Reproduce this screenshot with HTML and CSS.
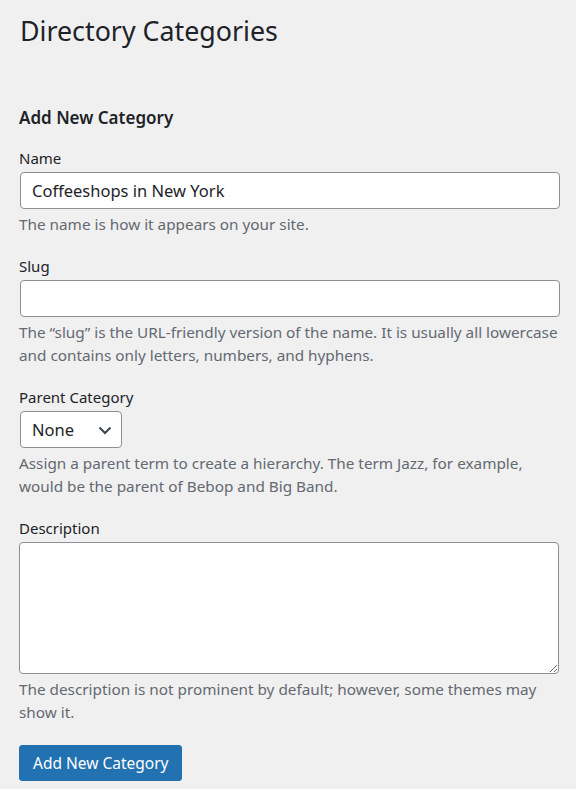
FILE: index.html
```html
<!DOCTYPE html>
<html lang="en">
<head>
<meta charset="utf-8">
<title>Directory Categories</title>
<link rel="stylesheet" href="styles.css">
</head>
<body>
<div class="wrap">
  <h1 class="page-title">Directory Categories</h1>
  <div class="form-wrap">
    <h2 class="form-title">Add New Category</h2>
    <form class="form">
      <div class="field">
        <label class="label" for="tag-name">Name</label>
        <input class="input" id="tag-name" type="text" value="Coffeeshops in New York">
        <p class="description">The name is how it appears on your site.</p>
      </div>
      <div class="field">
        <label class="label" for="tag-slug">Slug</label>
        <input class="input" id="tag-slug" type="text" value="">
        <p class="description">The “slug” is the URL-friendly version of the name. It is usually all lowercase and contains only letters, numbers, and hyphens.</p>
      </div>
      <div class="field">
        <label class="label" for="parent">Parent Category</label>
        <div class="select-wrap">
          <select class="select" id="parent"><option>None</option></select>
          <svg class="chevron" width="14" height="9" viewBox="0 0 14 9" aria-hidden="true"><path d="M1.5 1.5 L7 7 L12.5 1.5" fill="none" stroke="#3c434a" stroke-width="2"/></svg>
        </div>
        <p class="description">Assign a parent term to create a hierarchy. The term Jazz, for example, would be the parent of Bebop and Big Band.</p>
      </div>
      <div class="field">
        <label class="label" for="desc">Description</label>
        <textarea class="textarea" id="desc"></textarea>
        <p class="description">The description is not prominent by default; however, some themes may show it.</p>
      </div>
      <button class="button" type="button">Add New Category</button>
    </form>
  </div>
</div>
</body>
</html>
```
FILE: styles.css
```css
html, body {
  margin: 0;
  padding: 0;
  background: #f0f0f1;
}
body {
  font-family: "Noto Sans", "Open Sans", sans-serif;
  color: #1d2327;
  font-size: 15px;
  line-height: 23px;
}
.wrap {
  padding: 0 16px 0 19px;
}
.page-title {
  font-size: 26.8px;
  font-weight: 400;
  line-height: 36px;
  margin: 0;
  padding: 13px 0 0 1px;
}
.form-title {
  font-size: 17px;
  font-weight: 600;
  line-height: 23px;
  margin: 57px 0 0 0;
}
.form {
  margin-top: 18px;
  display: flex;
  flex-direction: column;
  align-items: flex-start;
}
.field {
  width: 541px;
  margin-bottom: 18px;
  display: flex;
  flex-direction: column;
  align-items: flex-start;
}
.label {
  display: block;
  font-size: 15px;
  line-height: 23px;
  margin-bottom: 2px;
}
.input {
  box-sizing: border-box;
  width: 540px;
  height: 37px;
  margin: 0 0 0 1px;
  padding: 0 11px;
  border: 1px solid #8c8f94;
  border-radius: 4px;
  background: #fff;
  font-family: inherit;
  font-size: 16.5px;
  color: #1d2327;
  outline: none;
}
.description {
  margin: 4px 0 0 0;
  color: #646970;
  font-size: 15.3px;
  line-height: 23.5px;
}
.select-wrap {
  position: relative;
  margin-left: 1px;
}
.select {
  appearance: none;
  -webkit-appearance: none;
  box-sizing: border-box;
  width: 102px;
  height: 37px;
  padding: 0 30px 0 11px;
  border: 1px solid #8c8f94;
  border-radius: 4px;
  background: #fff;
  font-family: inherit;
  font-size: 16.5px;
  color: #1d2327;
  outline: none;
}
.chevron {
  position: absolute;
  right: 10px;
  top: 15px;
  pointer-events: none;
}
.textarea {
  box-sizing: border-box;
  width: 540px;
  height: 132px;
  margin: 0;
  border: 1px solid #8c8f94;
  border-radius: 4px;
  background: #fff;
  font-family: inherit;
  outline: none;
}
.button {
  margin: 2px 0 0 0;
  box-sizing: border-box;
  height: 36px;
  padding: 0 13px;
  background: #2271b1;
  border: 1px solid #2271b1;
  border-radius: 3px;
  color: #fff;
  font-family: inherit;
  font-size: 15.5px;
  cursor: pointer;
}
```
